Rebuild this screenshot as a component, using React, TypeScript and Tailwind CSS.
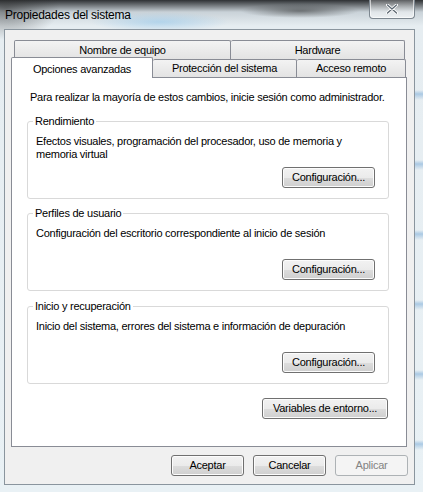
import React from "react";

const btn =
  "h-[21px] rounded-[3px] border border-[#707070] bg-[linear-gradient(to_bottom,#f2f2f2_0%,#ebebeb_50%,#dddddd_51%,#cfcfcf_100%)] shadow-[inset_0_0_0_1px_#fcfcfc] text-[11px] text-black flex items-center justify-center leading-none";

function Group({ label, children }: { label: string; children: React.ReactNode }) {
  return (
    <div className="relative h-[78px] mx-[15px] mr-[17px] border border-[#d9d9d9] rounded-[3px] flex flex-col pt-[13px] pl-[8px] pr-[13px] pb-[10px]">
      <span className="absolute -top-[8px] left-[5px] bg-white px-[2px] text-[11px] leading-[14px] text-black">
        {label}
      </span>
      <div className="text-[11px] leading-[13px] text-black">{children}</div>
      <div className="mt-auto self-end">
        <div className={btn + " w-[93px]"}>Configuración...</div>
      </div>
    </div>
  );
}

export default function App() {
  return (
    <div
      className="relative w-[423px] h-[492px] overflow-hidden bg-[#dfe8ee] flex flex-col tracking-[-0.25px]"
      style={{ fontFamily: '"Liberation Sans", Arial, sans-serif' }}
    >
      {/* glass background */}
      <div className="absolute inset-0 bg-[linear-gradient(to_bottom,#2e3134_0px,#6d7276_5px,#c9d2d8_12px,#e6edf1_26px,#e9f1f5_100%)]" />
      <div className="absolute left-0 top-0 w-[60px] h-[40px] bg-[radial-gradient(ellipse_at_10%_20%,rgba(40,40,40,0.5),transparent_70%)]" />
      <div className="absolute left-[240px] top-[4px] w-[120px] h-[14px] bg-[radial-gradient(ellipse_at_center,rgba(30,30,30,0.5),transparent_70%)]" />
      <div className="absolute left-[90px] top-[12px] w-[140px] h-[20px] bg-[radial-gradient(ellipse_at_center,rgba(150,200,235,0.6),transparent_70%)]" />
      <div className="absolute right-0 top-[30px] w-[9px] h-[460px] bg-[repeating-linear-gradient(to_bottom,transparent_0px,transparent_60px,rgba(120,170,215,0.55)_64px,transparent_70px)]" />

      {/* title bar */}
      <div className="relative h-[29px] flex items-start justify-between pl-[5px] pr-[8px]">
        <span className="mt-[8px] text-[12px] leading-[14px] text-black">Propiedades del sistema</span>
        <div className="w-[46px] h-[20px] -mt-[1px] rounded-b-[4px] border border-[#7d8790] border-t-0 bg-[linear-gradient(to_bottom,rgba(255,255,255,0.2),rgba(255,255,255,0.55))] shadow-[inset_0_0_0_1px_rgba(255,255,255,0.6)] flex items-center justify-center">
          <svg width="12" height="10" viewBox="0 0 12 10">
            <path d="M1.5 1 L10.5 9 M10.5 1 L1.5 9" stroke="#ffffff" strokeWidth="3" strokeLinecap="round" />
            <path d="M1.5 1 L10.5 9 M10.5 1 L1.5 9" stroke="#5b6670" strokeWidth="1.3" strokeLinecap="round" />
          </svg>
        </div>
      </div>

      {/* client area */}
      <div className="relative ml-[4px] mr-[8px] h-[456px] border border-[#8a959e] bg-[#f0f0f0] flex flex-col pt-[10px] px-[6px]">
        {/* tabs row 1 */}
        <div className="flex h-[19px] pl-[3px]">
          <div className="w-[217px] h-[19px] border border-[#898c95] border-b-0 rounded-t-[2px] bg-[linear-gradient(to_bottom,#f3f3f3,#e3e3e3)] flex items-center justify-center text-[11px] text-black">
            Nombre de equipo
          </div>
          <div className="w-[174px] h-[19px] border border-[#898c95] border-b-0 border-l-0 rounded-t-[2px] bg-[linear-gradient(to_bottom,#f3f3f3,#e3e3e3)] flex items-center justify-center text-[11px] text-black">
            Hardware
          </div>
        </div>
        {/* tabs row 2 */}
        <div className="flex items-end h-[18px]">
          <div className="relative z-10 w-[142px] h-[21px] -mb-px border border-[#898c95] border-b-0 rounded-t-[2px] bg-white flex items-start pt-[3px] justify-center text-[11px] text-black">
            Opciones avanzadas
          </div>
          <div className="w-[144px] h-[18px] border border-[#898c95] border-b-0 border-l-0 rounded-t-[2px] bg-[linear-gradient(to_bottom,#f3f3f3,#e3e3e3)] flex items-center justify-center text-[11px] text-black">
            Protección del sistema
          </div>
          <div className="w-[109px] h-[18px] border border-[#898c95] border-b-0 border-l-0 rounded-t-[2px] bg-[linear-gradient(to_bottom,#f3f3f3,#e3e3e3)] flex items-center justify-center text-[11px] text-black">
            Acceso remoto
          </div>
        </div>

        {/* panel */}
        <div className="w-[396px] h-[370px] border border-[#898c95] bg-white flex flex-col">
          <p className="mt-[13px] ml-[18px] text-[11px] leading-[13px] text-black whitespace-nowrap">
            Para realizar la mayoría de estos cambios, inicie sesión como administrador.
          </p>
          <div className="mt-[17px]">
            <Group label="Rendimiento">
              Efectos visuales, programación del procesador, uso de memoria y
              <br />
              memoria virtual
            </Group>
          </div>
          <div className="mt-[14px]">
            <Group label="Perfiles de usuario">
              Configuración del escritorio correspondiente al inicio de sesión
            </Group>
          </div>
          <div className="mt-[15px]">
            <Group label="Inicio y recuperación">
              Inicio del sistema, errores del sistema e información de depuración
            </Group>
          </div>
          <div className="mt-[14px] self-end mr-[18px]">
            <div className={btn + " w-[126px]"}>Variables de entorno...</div>
          </div>
        </div>

        {/* bottom buttons */}
        <div className="flex justify-end gap-[9px] mt-[8px] pr-0">
          <div className={btn + " w-[73px]"}>Aceptar</div>
          <div className={btn + " w-[73px]"}>Cancelar</div>
          <div className="w-[73px] h-[21px] rounded-[3px] border border-[#adb2b5] bg-[#f4f4f4] text-[11px] text-[#838383] flex items-center justify-center leading-none">
            Aplicar
          </div>
        </div>
      </div>
    </div>
  );
}
